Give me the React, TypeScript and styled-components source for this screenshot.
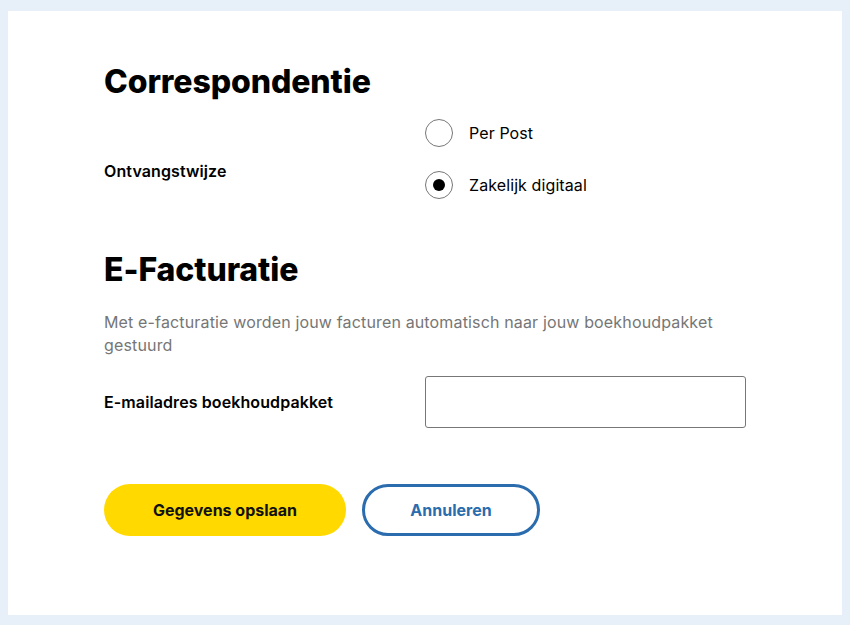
import React, { useState } from 'react';
import styled, { createGlobalStyle } from 'styled-components';

const GlobalStyle = createGlobalStyle`
  html, body {
    margin: 0;
    padding: 0;
    background: #e7f0f8;
  }
  body {
    font-family: Inter, "Liberation Sans", Arial, sans-serif;
    color: #000;
  }
`;

type Option = { value: string; label: string };

const options: Option[] = [
  { value: 'post', label: 'Per Post' },
  { value: 'digital', label: 'Zakelijk digitaal' },
];

export default function App() {
  const [delivery, setDelivery] = useState('digital');

  return (
    <>
      <GlobalStyle />
      <Page>
        <Card>
          <SectionTitle>Correspondentie</SectionTitle>
          <FieldRow $gapTop={17}>
            <FieldLabel $offset={24}>Ontvangstwijze</FieldLabel>
            <RadioGroup>
              {options.map((o) => (
                <RadioOption key={o.value} onClick={() => setDelivery(o.value)}>
                  <RadioCircle $checked={delivery === o.value} />
                  <RadioText>{o.label}</RadioText>
                </RadioOption>
              ))}
            </RadioGroup>
          </FieldRow>

          <SectionTitle $top={51}>E-Facturatie</SectionTitle>
          <Description>
            Met e-facturatie worden jouw facturen automatisch naar jouw boekhoudpakket gestuurd
          </Description>
          <FieldRow $gapTop={19}>
            <FieldLabel>E-mailadres boekhoudpakket</FieldLabel>
            <TextInput type="email" />
          </FieldRow>

          <Actions>
            <PrimaryButton>Gegevens opslaan</PrimaryButton>
            <SecondaryButton>Annuleren</SecondaryButton>
          </Actions>
        </Card>
      </Page>
    </>
  );
}

const Page = styled.div`
  padding: 11px 8px 10px 8px;
  min-height: 625px;
  box-sizing: border-box;
`;

const Card = styled.div`
  background: #fff;
  height: 604px;
  box-sizing: border-box;
  padding: 51px 96px 0 96px;
  display: flex;
  flex-direction: column;
`;

const SectionTitle = styled.h2<{ $top?: number }>`
  margin: ${(p) => p.$top ?? 0}px 0 0 0;
  font-family: Inter, "Liberation Sans", sans-serif;
  font-size: 32px;
  font-weight: 800;
  letter-spacing: -0.1px;
  line-height: 40px;
`;

const FieldRow = styled.div<{ $gapTop: number }>`
  margin-top: ${(p) => p.$gapTop}px;
  display: grid;
  grid-template-columns: 321px 321px;
  align-items: center;
`;

const FieldLabel = styled.div<{ $offset?: number }>`
  padding-top: ${(p) => p.$offset ?? 0}px;
  font-size: 16px;
  font-weight: 600;
  letter-spacing: 0.1px;
`;

const RadioGroup = styled.div`
  display: flex;
  flex-direction: column;
  gap: 24px;
`;

const RadioOption = styled.label`
  display: flex;
  align-items: center;
  gap: 16px;
  cursor: pointer;
  height: 28px;
`;

const RadioCircle = styled.span<{ $checked: boolean }>`
  width: 28px;
  height: 28px;
  box-sizing: border-box;
  border: 1px solid #777;
  border-radius: 50%;
  display: flex;
  align-items: center;
  justify-content: center;
  &::after {
    content: '';
    width: 12px;
    height: 12px;
    border-radius: 50%;
    background: #000;
    display: ${(p) => (p.$checked ? 'block' : 'none')};
  }
`;

const RadioText = styled.span`
  font-size: 16px;
  letter-spacing: 0.1px;
`;

const Description = styled.p`
  margin: 21px 0 0 0;
  max-width: 642px;
  font-size: 16px;
  line-height: 23px;
  color: #767676;
  letter-spacing: 0.15px;
`;

const TextInput = styled.input`
  width: 321px;
  height: 52px;
  box-sizing: border-box;
  border: 1px solid #777;
  border-radius: 3px;
  padding: 0 12px;
  font-size: 16px;
  font-family: inherit;
  outline: none;
`;

const Actions = styled.div`
  margin-top: 56px;
  display: flex;
  gap: 16px;
`;

const BaseButton = styled.button`
  height: 52px;
  border-radius: 26px;
  font-family: Inter, "Liberation Sans", sans-serif;
  font-size: 16px;
  font-weight: 700;
  cursor: pointer;
  box-sizing: border-box;
`;

const PrimaryButton = styled(BaseButton)`
  width: 242px;
  background: #ffd900;
  border: none;
  color: #111;
`;

const SecondaryButton = styled(BaseButton)`
  width: 178px;
  background: #fff;
  border: 3px solid #2a6cad;
  color: #2a6cad;
`;
